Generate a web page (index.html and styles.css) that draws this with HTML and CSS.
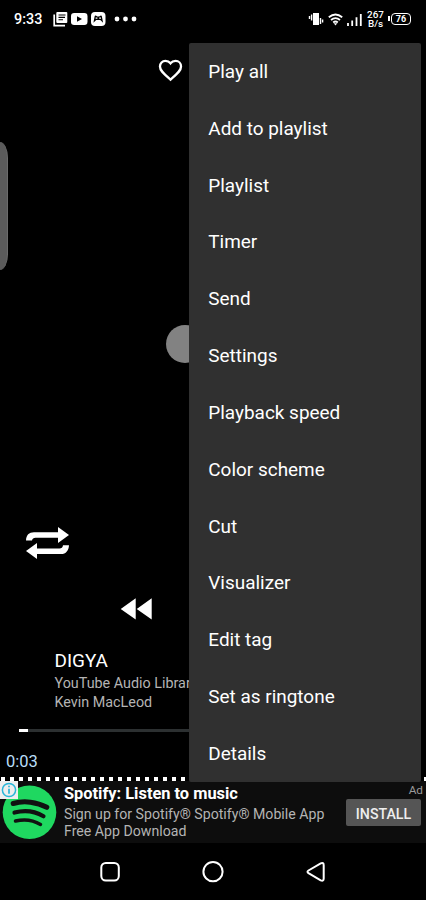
FILE: index.html
```html
<!DOCTYPE html>
<html lang="en">
<head>
<meta charset="utf-8">
<title>Music player</title>
<link rel="stylesheet" href="styles.css">
</head>
<body>
<div class="screen">
  <header class="status">
    <span class="clock">9:33</span>
    <svg class="notifications" width="86" height="16" viewBox="0 0 86 16">
      <path d="M1.2 3.5v11.2H12" fill="none" stroke="#fff" stroke-width="1.7"/>
      <rect x="3.3" y="1" width="11" height="11" rx="1" fill="#fff"/>
      <path d="M5.5 4h7M5.5 6.4h6.5M5.5 8.8h4.5" stroke="#000" stroke-width="1.1"/>
      <rect x="18" y="2" width="16.5" height="12" rx="3.2" fill="#fff"/>
      <path d="M24 5.3v5.4l5-2.7z" fill="#000"/>
      <rect x="38" y="1" width="14.5" height="14" rx="4" fill="#fff"/>
      <path d="M40.4 11.7l1.2-6.3q.4-1.2 1.6-.6l1.1.8h1.9l1.1-.8q1.2-.6 1.6.6l1.2 6.3-2.8-2.8h-4.1z" fill="#000"/>
      <path d="M42.6 7.2h1.800M46.200 7.200H48" stroke="#fff" stroke-width="1.2"/>
      <g fill="#fff"><circle cx="64" cy="8" r="2.400"/><circle cx="72.5" cy="8" r="2.400"/><circle cx="81" cy="8" r="2.400"/></g>
    </svg>
    <svg class="signals" width="56" height="16" viewBox="0 0 56 16">
      <rect x="5" y="2" width="6" height="12" fill="#fff"/>
      <path d="M1.500 5v3M3.600 3.500v6M12.500 7v6M14.600 8.500v3" stroke="#fff" stroke-width="1.4"/>
      <g fill="none" stroke="#fff" stroke-width="1.8"><path d="M20.8 6.2q6.7-5.5 13.4 0M23 9q4.5-3.7 9 0M25.2 11.5q2.3-2 4.6 0"/></g>
      <path d="M25.7 12.2h3.6l-1.8 2.2z" fill="#fff"/>
      <path d="M40 12v3M44.2 9.5V15M48.5 6.2V15M52.8 3v12" stroke="#fff" stroke-width="1.8"/>
    </svg>
    <span class="rate">267<br>B/s</span>
    <span class="battery">76</span>
  </header>

  <main class="player">
    <div class="top-row">
      <svg width="25" height="23" viewBox="0 0 26 24"><path d="M13 21.5l-1.7-1.5C5.5 14.9 2 11.8 2 7.8 2 4.5 4.5 2 7.7 2c2 0 4 .9 5.3 2.5C14.300 2.900 16.300 2 18.300 2 21.500 2 24 4.500 24 7.800c0 4-3.500 7.100-9.300 12.200z" fill="none" stroke="#fff" stroke-width="2.4"/></svg>
    </div>
    <div class="edge-handle"></div>
    <div class="knob"></div>
    <div class="repeat">
      <svg width="44" height="32" viewBox="0 0 44 32" fill="#fff">
        <path d="M0 13.400C.2 8.200 3 5.300 8 5.300H32V0L43 8 32 16V10.800H9.500Q6.500 10.800 6 13.400z"/>
        <path d="M43 18.200C42.800 23.400 40 27 35 27H11v5L0 24 11 16v5.400H33.500Q36.500 21.400 37 18.200z"/>
      </svg>
    </div>
    <div class="rewind">
      <svg width="32" height="22" viewBox="0 0 32 22" fill="#fff"><path d="M15.700.3v21.200L.7 10.900zM31.700.3v21.200L16.700 10.900z"/></svg>
    </div>
    <section class="track">
      <div class="title">DIGYA</div>
      <div class="meta">YouTube Audio Library</div>
      <div class="meta">Kevin MacLeod</div>
    </section>
    <div class="progress"><div class="elapsed"></div></div>
    <div class="time">0:03</div>
    <div class="dots"></div>
  </main>

  <aside class="ad">
    <svg class="ad-logo" width="60" height="62" viewBox="0 0 60 62">
      <circle cx="29.500" cy="31.300" r="26.800" fill="#1fd860"/>
      <g fill="none" stroke="#111" stroke-linecap="round">
        <path d="M13.200 22.500C24 19.300 37 21 46.800 26.300" stroke-width="5"/>
        <path d="M14.500 31.600C24 28.900 35 30.200 43.500 35.200" stroke-width="4.200"/>
        <path d="M15.500 40C24 38 33 38.900 40.500 43.400" stroke-width="3.500"/>
      </g>
      <path d="M0 0H18V18H0z" fill="#eee"/>
      <circle cx="9" cy="9" r="6.600" fill="none" stroke="#28b5d8" stroke-width="1.500"/>
      <path d="M9 7.700v5M9 4.700v1.600" stroke="#28b5d8" stroke-width="1.700"/>
    </svg>
    <div class="ad-copy">
      <div class="ad-title">Spotify: Listen to music</div>
      <div class="ad-text">Sign up for Spotify® Spotify® Mobile App<br>Free App Download</div>
    </div>
    <div class="ad-side">
      <span class="ad-label">Ad</span>
      <div class="install">INSTALL</div>
    </div>
  </aside>

  <nav class="nav">
    <svg width="22" height="22" viewBox="0 0 22 22"><rect x="2.300" y="2" width="17.500" height="17.500" rx="4.500"/></svg>
    <svg width="22" height="22" viewBox="0 0 22 22"><circle cx="11" cy="10.700" r="9.600"/></svg>
    <svg width="22" height="22" viewBox="0 0 22 22"><path d="M3.500 9.500L15.700 2.300Q18.700 1 18.700 4.200V17.400Q18.700 20.600 15.700 19.300L3.500 12.100Q1.500 10.800 3.500 9.500z"/></svg>
  </nav>

  <div class="menu">
    <div class="item">Play all</div>
    <div class="item">Add to playlist</div>
    <div class="item">Playlist</div>
    <div class="item">Timer</div>
    <div class="item">Send</div>
    <div class="item">Settings</div>
    <div class="item">Playback speed</div>
    <div class="item">Color scheme</div>
    <div class="item">Cut</div>
    <div class="item">Visualizer</div>
    <div class="item">Edit tag</div>
    <div class="item">Set as ringtone</div>
    <div class="item">Details</div>
  </div>
</div>
</body>
</html>
```

FILE: styles.css
```css
* { box-sizing: border-box; }
body { margin: 0; background: #000; color: #fff; font-family: Roboto, sans-serif; }
svg { display: block; flex: none; }
.screen { position: relative; width: 426px; height: 900px; display: flex; flex-direction: column; overflow: hidden; }

.status { height: 38px; flex: none; display: flex; align-items: center; padding-left: 14px; }
.clock { width: 39px; padding-top: 1px; font-size: 14.4px; font-weight: 500; line-height: 38px; }
.signals { margin-left: 169px; }
.rate { width: 21px; margin-left: 1px; font-size: 9.9px; line-height: 9.5px; text-align: center; font-weight: 500; white-space: nowrap; }
.battery { position: relative; width: 20px; height: 12px; margin-left: 5px; border: 1.5px solid #fff; border-radius: 4px; font-size: 9px; font-weight: 700; line-height: 11px; text-align: center; }
.battery::before { content: ""; position: absolute; left: -4px; top: 2px; width: 2px; height: 5px; background: #fff; }

.player { height: 743px; flex: none; display: flex; flex-direction: column; align-items: flex-start; }
.top-row { height: 104px; padding: 21px 0 0 158px; flex: none; }
.edge-handle { width: 8px; height: 128px; flex: none; border-radius: 0 8px 8px 0 / 0 16px 16px 0; background: #5b5b5b; border-right: 1px solid #6b6b6b; }
.knob { width: 38px; height: 38px; flex: none; margin: 55px 0 0 166px; border-radius: 50%; background: #828282; }
.repeat { margin: 164px 0 0 26px; }
.rewind { margin: 39px 0 0 120px; }
.track { margin: 28px 0 0 54.500px; white-space: nowrap; }
.title { height: 26px; font-size: 18.950px; line-height: 25px; }
.meta { height: 19px; font-size: 14.350px; line-height: 19px; color: #b4b4b4; }
.progress { width: 388px; height: 3px; margin: 17px 0 0 19px; background: #2c3031; }
.elapsed { width: 9px; height: 3px; background: #fff; }
.time { margin: 20px 0 0 6px; height: 20px; font-size: 16.500px; line-height: 20px; color: #b9def8; }
.dots { width: 100%; height: 4px; margin-top: auto; background: repeating-linear-gradient(90deg, transparent 0 1px, #fff 1px 5px, transparent 5px 9px); }

.ad { height: 62px; flex: none; display: flex; background: #0d0d0d; }
.ad-copy { flex: 1; padding: 2px 0 0 4px; white-space: nowrap; }
.ad-title { font-size: 16.400px; font-weight: 700; line-height: 21px; }
.ad-text { margin-top: 2px; font-size: 14.150px; line-height: 16.500px; color: #b4b4b4; }
.ad-side { width: 80px; padding-right: 5px; display: flex; flex-direction: column; }
.ad-label { height: 18px; margin-right: -2px; font-size: 11.800px; line-height: 18px; text-align: right; color: #9a9a9a; }
.install { height: 27px; background: #555; border-radius: 2px; font-size: 14.200px; font-weight: 500; line-height: 30px; text-align: center; color: #eee; }

.nav { flex: 1; display: flex; justify-content: space-between; padding: 18px 99px 0; }
.nav svg { fill: none; stroke: #fff; stroke-width: 2; }

.menu { position: absolute; left: 189px; top: 43px; width: 232px; height: 738.500px; display: flex; flex-direction: column; background: #303030; border-radius: 2px; }
.item { flex: 1; display: flex; align-items: center; padding: 1.200px 0 0 19.300px; font-size: 18.950px; line-height: 24px; }
```
